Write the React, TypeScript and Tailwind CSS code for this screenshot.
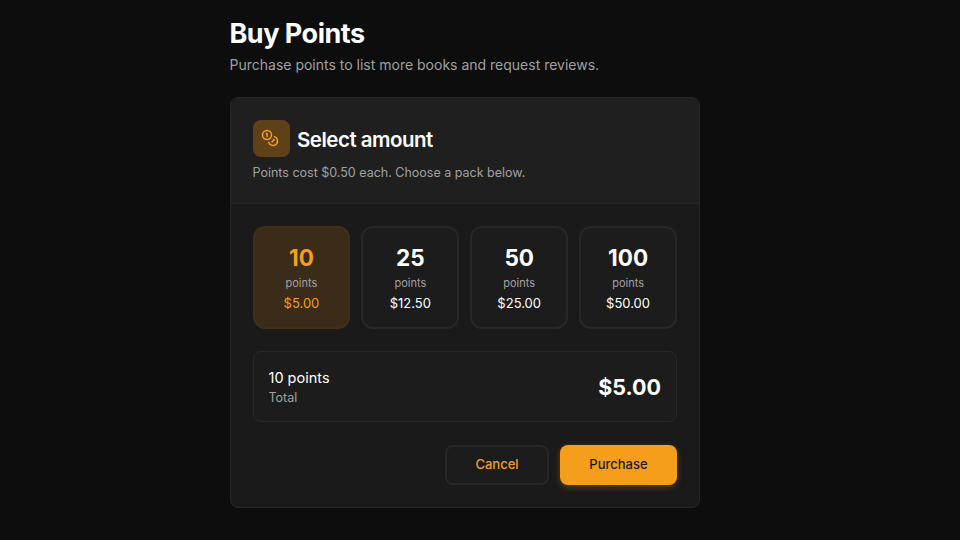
import { Coins } from "lucide-react";

const packs = [
  { n: "10", price: "$5.00", active: true },
  { n: "25", price: "$12.50", active: false },
  { n: "50", price: "$25.00", active: false },
  { n: "100", price: "$50.00", active: false },
];

export default function App() {
  return (
    <div className="h-[540px] overflow-hidden bg-[#0d0d0d] pt-[16px] font-['Inter',sans-serif]">
      <div className="ml-[229.5px] w-[470.5px]">
        <h1 className="text-[27px] leading-[36px] font-bold tracking-[-0.5px] text-white">Buy Points</h1>
        <p className="mt-[1px] text-[14px] leading-[24px] text-[#a0a0a0]">Purchase points to list more books and request reviews.</p>
        <div className="mt-[20px] h-[411px] rounded-[8px] border border-[#272727] bg-[#1a1a1a]">
          <div className="h-[106px] rounded-t-[8px] border-b border-[#272727] bg-[#1f1f1f] px-[22px] pt-[22px]">
            <div className="flex items-center gap-[7.5px]">
              <div className="flex h-[37px] w-[37px] items-center justify-center rounded-[8px] bg-[#5f4119]">
                <Coins size={18} className="-translate-x-[1px] -translate-y-[1px] text-[#f59e1b]" strokeWidth={2} />
              </div>
              <h2 className="h-[37px] pt-[1px] text-[20.5px] leading-[37px] font-semibold tracking-[-0.5px] text-white">Select amount</h2>
            </div>
            <p className="mt-[6px] text-[12.5px] leading-[20px] text-[#a0a0a0]">Points cost $0.50 each. Choose a pack below.</p>
          </div>
          <div className="px-[22px] pt-[22px]">
            <div className="grid grid-cols-4 gap-[11px]">
              {packs.map((p) => (
                <div
                  key={p.n}
                  className={`flex h-[103px] flex-col items-center rounded-[12px] border-2 pt-[15px] ${
                    p.active ? "border-[#3f3019] bg-[#3a2c18]" : "border-[#272727] bg-[#1c1c1c]"
                  }`}
                >
                  <div className={`text-[22.5px] leading-[30px] font-bold ${p.active ? "text-[#f59e1b]" : "text-white"}`}>{p.n}</div>
                  <div className="mt-[2px] text-[11px] leading-[16px] text-[#a0a0a0]">points</div>
                  <div className={`mt-[2px] text-[13px] leading-[20px] ${p.active ? "text-[#f59e1b]" : "text-white"}`}>{p.price}</div>
                </div>
              ))}
            </div>
            <div className="mt-[22px] flex h-[71px] items-center justify-between rounded-[8px] border border-[#272727] bg-[#1c1c1c] px-[15px]">
              <div className="pt-[1px]">
                <div className="text-[14.5px] leading-[20px] text-white">10 points</div>
                <div className="text-[12.5px] leading-[19px] text-[#a0a0a0]">Total</div>
              </div>
              <div className="text-[21.5px] leading-[30px] font-bold text-white">$5.00</div>
            </div>
            <div className="mt-[23px] flex justify-end gap-[11px]">
              <button className="h-[40px] w-[104px] rounded-[8px] border-2 border-[#272727] bg-[#1c1c1c] text-[13px] font-medium text-[#f59e1b]">Cancel</button>
              <button className="h-[40px] w-[117px] rounded-[8px] bg-[#f59e1b] text-[13px] font-medium text-[#1a1a1a] shadow-[0_2px_6px_rgba(245,158,27,0.3)]">Purchase</button>
            </div>
          </div>
        </div>
      </div>
    </div>
  );
}
